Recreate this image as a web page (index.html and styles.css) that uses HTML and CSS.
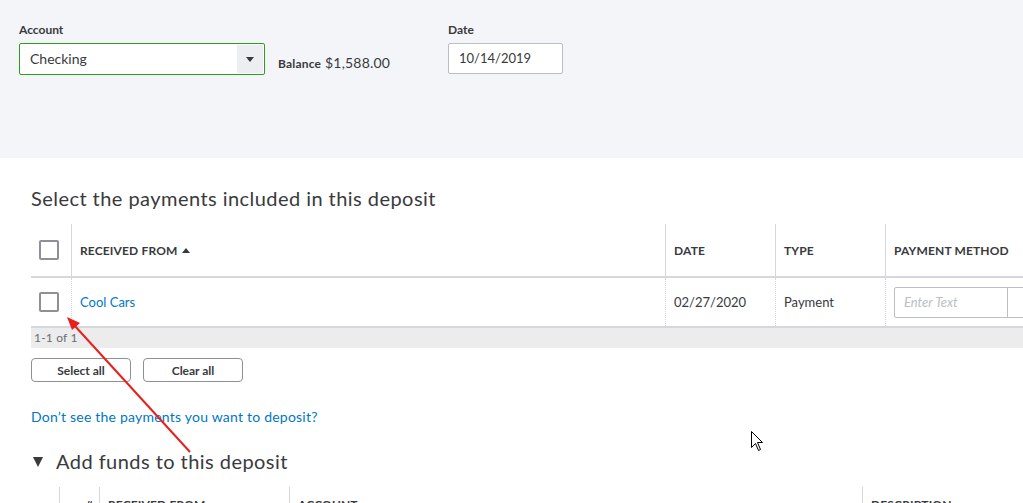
FILE: index.html
```html
<!DOCTYPE html>
<html lang="en">
<head>
    <meta charset="UTF-8">
    <title>Bank Deposit</title>
    <link rel="stylesheet" href="styles.css">
</head>
<body>
<div class="top">
    <div class="field">
        <label>Account</label>
        <div class="account-select">
            <span class="select-text">Checking</span>
            <span class="select-btn"><span class="caret"></span></span>
        </div>
    </div>
    <div class="balance"><b>Balance</b> $1,588.00</div>
    <div class="field">
        <label>Date</label>
        <div class="date-input">10/14/2019</div>
    </div>
</div>

<div class="main">
    <h2 class="title">Select the payments included in this deposit</h2>

    <div class="table">
        <div class="row head pay-cols">
            <div class="cell check"><span class="box"></span></div>
            <div class="cell">Received from <span class="sort"></span></div>
            <div class="cell">Date</div>
            <div class="cell">Type</div>
            <div class="cell">Payment method</div>
        </div>
        <div class="row item pay-cols">
            <div class="cell check"><span class="box"></span></div>
            <div class="cell"><a class="link">Cool Cars</a></div>
            <div class="cell">02/27/2020</div>
            <div class="cell">Payment</div>
            <div class="cell">
                <div class="combo">
                    <span class="combo-text">Enter Text</span>
                    <span class="combo-btn"><span class="caret"></span></span>
                </div>
            </div>
        </div>
        <div class="pager">1-1 of 1</div>
    </div>

    <div class="actions">
        <button class="btn">Select all</button>
        <button class="btn">Clear all</button>
    </div>

    <p class="hint"><a class="link">Don’t see the payments you want to deposit?</a></p>

    <h2 class="title funds"><span class="toggle"></span>Add funds to this deposit</h2>

    <div class="table">
        <div class="row head fund-cols">
            <div class="cell blank"></div>
            <div class="cell num">#</div>
            <div class="cell">Received from</div>
            <div class="cell">Account</div>
            <div class="cell">Description</div>
        </div>
    </div>
</div>

<svg class="overlay" width="1023" height="503" viewBox="0 0 1023 503">
    <line x1="190" y1="452" x2="74" y2="325" stroke="#e8201c" stroke-width="2"/>
    <polygon points="67,317 80,323 72,330" fill="#e8201c"/>
    <path d="M751.5 431.5 L751.5 447.5 L755.5 443.5 L758.5 450.5 L760.5 449.5 L757.5 442.5 L762.5 442.5 Z" fill="#fff" stroke="#000" stroke-width="1"/>
</svg>
</body>
</html>
```

FILE: styles.css
```css
body {
    margin: 0;
    font-family: Lato, "Open Sans", sans-serif;
    color: #393a3d;
    background: #fff;
    overflow: hidden;
    position: relative;
}
.top {
    background: #f4f5f8;
    height: 158px;
    box-sizing: border-box;
    padding: 22px 19px 0;
    display: flex;
    align-items: flex-start;
}
.field label {
    display: block;
    font-size: 12px;
    font-weight: bold;
    line-height: 16px;
    margin-bottom: 5px;
}
.account-select {
    width: 246px;
    height: 32px;
    box-sizing: border-box;
    border: 1px solid #2ca01c;
    border-radius: 2px;
    background: #fff;
    display: flex;
}
.select-text {
    flex: 1;
    padding-left: 10px;
    font-size: 14px;
    line-height: 30px;
}
.select-btn {
    width: 26px;
    margin: 1px;
    background: #eceef1;
    display: flex;
    align-items: center;
    justify-content: center;
}
.caret {
    width: 0;
    height: 0;
    border-left: 4px solid transparent;
    border-right: 4px solid transparent;
    border-top: 5px solid #393a3d;
}
.balance {
    width: 157px;
    margin: 31px 13px 0;
    font-size: 14px;
    line-height: 20px;
    letter-spacing: 0.2px;
}
.balance b {
    font-size: 12px;
}
.date-input {
    width: 115px;
    height: 31px;
    box-sizing: border-box;
    border: 1px solid #babec5;
    border-radius: 2px;
    background: #fff;
    padding-left: 10px;
    font-size: 13px;
    line-height: 29px;
}
.main {
    padding-left: 31px;
    overflow: hidden;
}
.title {
    margin: 26px 0 12px;
    font-size: 20px;
    font-weight: normal;
    line-height: 28px;
    letter-spacing: 0.45px;
    white-space: nowrap;
}
.table {
    width: 1150px;
}
.row {
    display: grid;
}
.pay-cols {
    grid-template-columns: 40px 594px 110px 110px 296px;
}
.fund-cols {
    grid-template-columns: 28px 40px 190px 573px 319px;
}
.cell {
    display: flex;
    align-items: center;
    padding-left: 8px;
}
.head {
    height: 52px;
    border-bottom: 2px solid #d4d7dc;
    font-size: 12px;
    font-weight: bold;
    text-transform: uppercase;
    letter-spacing: 0.15px;
}
.head .cell + .cell {
    border-left: 1px solid #d4d7dc;
}
.item {
    height: 48px;
    border-bottom: 2px solid #d4d7dc;
    font-size: 13px;
}
.item .cell + .cell {
    border-left: 1px dotted #d4d7dc;
}
.box {
    width: 20px;
    height: 20px;
    box-sizing: border-box;
    border: 2px solid #8d9096;
    border-radius: 2px;
    background: #fff;
}
.sort {
    margin-left: 5px;
    width: 0;
    height: 0;
    border-left: 4px solid transparent;
    border-right: 4px solid transparent;
    border-bottom: 5px solid #393a3d;
}
.link {
    color: #0077c5;
    text-decoration: none;
}
.combo {
    width: 160px;
    height: 31px;
    box-sizing: border-box;
    border: 1px solid #babec5;
    border-radius: 2px;
    display: flex;
}
.combo-text {
    width: 113px;
    box-sizing: border-box;
    border-right: 1px solid #babec5;
    padding-left: 9px;
    line-height: 29px;
    font-style: italic;
    color: #babec5;
}
.combo-btn {
    flex: 1;
    display: flex;
    align-items: center;
    justify-content: center;
}
.pager {
    height: 20px;
    background: #ececec;
    padding-left: 3px;
    font-size: 12px;
    line-height: 20px;
    color: #6b6c72;
    letter-spacing: 0.2px;
}
.actions {
    display: flex;
    gap: 12px;
    margin-top: 10px;
}
.btn {
    width: 100px;
    height: 24px;
    border: 1px solid #8d9096;
    border-radius: 4px;
    background: #fff;
    color: #393a3d;
    font-family: inherit;
    font-size: 12px;
    font-weight: bold;
    padding: 0;
}
.hint {
    margin: 26px 0 0;
    font-size: 14px;
    line-height: 18px;
    letter-spacing: 0.22px;
}
.funds {
    margin: 21px 0 12px;
    display: flex;
    align-items: center;
}
.toggle {
    margin: 2px 13px 0 2px;
    width: 0;
    height: 0;
    border-left: 5px solid transparent;
    border-right: 5px solid transparent;
    border-top: 10px solid #393a3d;
}
.fund-cols .cell {
    align-items: flex-start;
    padding-top: 10px;
    line-height: 16px;
}
.fund-cols .num {
    justify-content: flex-end;
    padding-right: 6px;
}
.fund-cols .blank {
    padding: 0;
}
.head .blank + .cell {
    border-left: 1px solid #d4d7dc;
}
.overlay {
    position: absolute;
    top: 0;
    left: 0;
    pointer-events: none;
}
```
